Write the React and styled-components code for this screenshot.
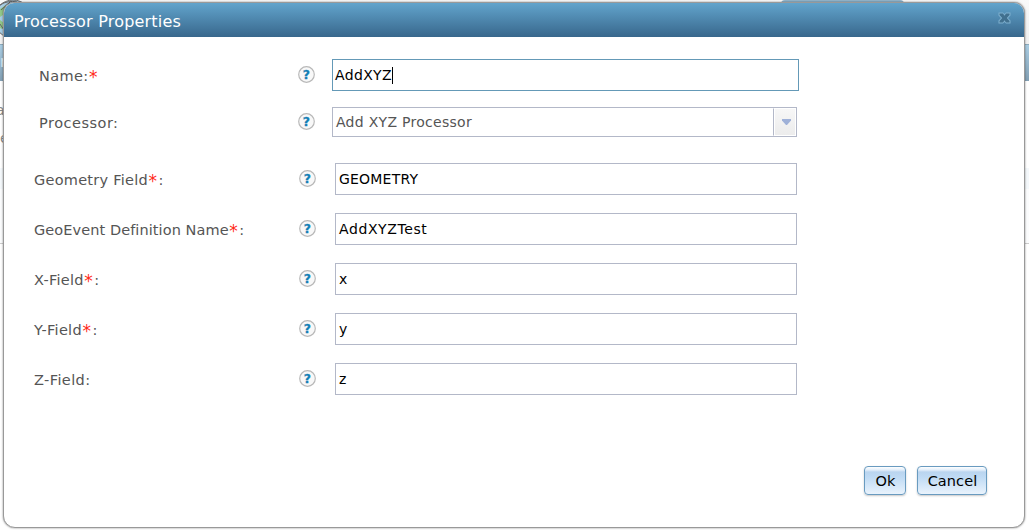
import React from 'react';
import styled, { createGlobalStyle } from 'styled-components';

const GlobalStyle = createGlobalStyle`
  * { box-sizing: border-box; }
  body { margin: 0; overflow: hidden; background: #fff; font-family: "DejaVu Sans", Verdana, sans-serif; }
`;

const Screen = styled.div`
  position: relative;
  width: 1029px;
  height: 532px;
  padding: 2px 4px 4px 3px;
  overflow: hidden;
`;

const Backdrop = styled.div`
  position: absolute;
  inset: 0;
  display: flex;
  flex-direction: column;
`;

const PageTop = styled.div`
  height: 44px;
  background: linear-gradient(#f9f9f9, #f0f0f0);
`;

const PageTab = styled.div`
  width: 123px;
  height: 20px;
  margin-left: 781px;
  border-radius: 4px 4px 0 0;
  background: #91b5cc;
`;

const PageNav = styled.div`
  height: 37px;
  border-top: 1px solid #8ba9bb;
  background: linear-gradient(#a9cce2, #829fb3);
  color: #e8f0f5;
  font-size: 15px;
  line-height: 34px;
`;

const PageBody = styled.div`
  height: 163px;
  padding-top: 15px;
  border-bottom: 1px solid #ccc;
  background: linear-gradient(#fff 0 87px, #f4f8fb 87px 108px, #fbfcfd 108px);
  color: #8a8a8a;
  font-size: 14px;
  line-height: 28px;
`;

const PageLine = styled.div`
  margin-left: ${(p) => p.$shift}px;
`;

const Globe = styled.svg`
  position: absolute;
  top: 0;
  left: 0;
`;

const Dialog = styled.div`
  position: relative;
  display: flex;
  flex-direction: column;
  height: 526px;
  border: 1px solid #999;
  border-radius: 11px 11px 12px 12px;
  background: #fff;
  box-shadow: 0 0 2px rgba(0, 0, 0, 0.5);
  overflow: hidden;
`;

const Header = styled.div`
  display: flex;
  justify-content: space-between;
  height: 34px;
  padding: 0 13px 0 10px;
  background: linear-gradient(#62a4cc, #38678c);
  color: #fff;
`;

const Title = styled.div`
  font-size: 16px;
  line-height: 37px;
  letter-spacing: 0.2px;
`;

const CloseIcon = styled.svg`
  margin-top: 8px;
`;

const Form = styled.div`
  display: flex;
  flex-direction: column;
  padding: 22px 0 0 30px;
`;

const MainFields = styled.div`
  display: flex;
  flex-direction: column;
  gap: 16px;
  padding-left: 5px;
`;

const PropertyFields = styled.div`
  display: flex;
  flex-direction: column;
  gap: 18px;
  margin-top: 26px;
`;

const Row = styled.div`
  display: flex;
  align-items: center;
`;

const Label = styled.div`
  width: ${(p) => p.$width}px;
  padding-top: 1px;
  color: #555;
  font-size: 14.5px;
  line-height: 20px;
  white-space: nowrap;
`;

const LabelText = styled.span`
  letter-spacing: ${(p) => p.$track ?? 0.2}px;
`;

const Required = styled.span`
  margin: 0 1.5px 0 ${(p) => p.$before ?? 0.5}px;
  color: #ff2a1a;
  font-size: 17px;
  line-height: 1px;
  vertical-align: -2px;
`;

const HelpIcon = styled.svg`
  flex: none;
  margin: 0 ${(p) => p.$gap}px 0 0;
`;

const Field = styled.div`
  display: flex;
  align-items: center;
  width: ${(p) => (p.$focused ? 467 : 462)}px;
  height: 32px;
  padding-left: ${(p) => (p.$focused ? 2 : 3)}px;
  border: 1px solid ${(p) => (p.$focused ? '#6499b7' : '#b3b8c8')};
  color: #000;
  font-size: 14px;
  letter-spacing: ${(p) => p.$track || 0}px;
`;

const Caret = styled.span`
  width: 1px;
  height: 17px;
  background: #000;
`;

const Select = styled.div`
  display: flex;
  justify-content: space-between;
  width: 465px;
  height: 30px;
  padding-left: 3px;
  border: 1px solid #b3b8c8;
  color: #555;
  font-size: 14px;
  line-height: 29px;
  letter-spacing: 0.28px;
`;

const SelectArrow = styled.div`
  display: flex;
  align-items: center;
  justify-content: center;
  width: 23px;
  padding: 0 0 0 3px;
  border: 1px solid #fff;
  border-left-color: #b3b8c8;
  box-shadow: inset 1px 0 #fff;
  background: linear-gradient(#f7f7f7, #ececec);
`;

const Actions = styled.div`
  display: flex;
  gap: 11px;
  margin: auto 37px 32px auto;
`;

const Button = styled.button`
  width: ${(p) => p.$width}px;
  height: 29px;
  padding: 1px 0 0 1px;
  border: 1px solid #699bc0;
  border-radius: 4px;
  background: linear-gradient(#fff 0, #e2eefa 3px, #bad5ef 5px, #bfdaf4 10px, #e9f3fc 100%);
  box-shadow: 0 1px 2px rgba(0, 0, 0, 0.22);
  color: #000;
  font: 14.5px "DejaVu Sans", Verdana, sans-serif;
  letter-spacing: 0.1px;
`;

function Help({ gap }) {
  return (
    <HelpIcon $gap={gap} width="18" height="18" viewBox="0 0 18 18">
      <circle cx="9.5" cy="8.5" r="7.8" fill="#f8f8f8" stroke="#b9b9b9" strokeWidth="1.2" />
      <text x="9.5" y="13" textAnchor="middle" fill="#147fb5" stroke="#147fb5" strokeWidth="0.3" fontSize="12.5" fontWeight="bold" fontFamily="DejaVu Sans">?</text>
    </HelpIcon>
  );
}

const properties = [
  { label: 'Geometry Field', required: true, value: 'GEOMETRY', track: 0.2 },
  { label: 'GeoEvent Definition Name', required: true, value: 'AddXYZTest', track: 0.6, labelTrack: 0.08 },
  { label: 'X-Field', required: true, value: 'x' },
  { label: 'Y-Field', required: true, value: 'y', labelTrack: 0.3 },
  { label: 'Z-Field', required: false, value: 'z', labelTrack: 0.4 },
];

export default function App() {
  return (
    <Screen>
      <GlobalStyle />
      <Backdrop>
        <PageTop><PageTab /></PageTop>
        <PageNav>r</PageNav>
        <PageBody>
          <PageLine $shift={-4}>a</PageLine>
          <PageLine $shift={0}>e</PageLine>
        </PageBody>
      </Backdrop>
      <Globe width="28" height="40" viewBox="0 0 28 40">
        <circle cx="13" cy="19" r="19" fill="#a7cde4" stroke="#666" strokeWidth="1" />
        <path d="M0 9L6 5L9 7L3 15L0 17ZM0 20L4 23L2 29L0 28Z" fill="#91c788" />
        <path d="M0 5Q8 0 17 2M1 10L10 2M0 24L8 36" fill="none" stroke="#666" />
      </Globe>
      <Dialog>
        <Header>
          <Title>Processor Properties</Title>
          <CloseIcon width="13" height="13" viewBox="0 0 13 13">
            <path d="M0.5 1.5H5L6.5 3L8 1.5H12.5V4.5L10 7L12.5 9.5V12.5H8L6.5 11L5 12.5H0.5V9.5L3 7L0.5 4.5Z" fill="#7fb0cf" />
            <path d="M1.5 2.5H5L6.5 4.8L8 2.5H11.5V4L8.8 7L11.5 10V11.5H8L6.5 9.2L5 11.5H1.5V10L4.2 7L1.5 4Z" fill="#41708f" />
          </CloseIcon>
        </Header>
        <Form>
          <MainFields>
            <Row>
              <Label $width={258}><LabelText $track={0.35}>Name:</LabelText><Required $before={0.5}>*</Required></Label>
              <Help gap={17} />
              <Field $focused $track={0.35}>AddXYZ<Caret /></Field>
            </Row>
            <Row>
              <Label $width={258}><LabelText $track={0.5}>Processor:</LabelText></Label>
              <Help gap={17} />
              <Select>
                Add XYZ Processor
                <SelectArrow>
                  <svg width="9" height="6" viewBox="0 0 9 6">
                    <path d="M0 0H9V1.5L5 6H4L0 1.5Z" fill="#9fb1d8" />
                  </svg>
                </SelectArrow>
              </Select>
            </Row>
          </MainFields>
          <PropertyFields>
            {properties.map((p) => (
              <Row key={p.label}>
                <Label $width={264}>
                  <LabelText $track={p.labelTrack ?? 0.25}>{p.label}</LabelText>
                  {p.required && <Required>*</Required>}
                  <LabelText>:</LabelText>
                </Label>
                <Help gap={19} />
                <Field $track={p.track}>{p.value}</Field>
              </Row>
            ))}
          </PropertyFields>
        </Form>
        <Actions>
          <Button $width={42}>Ok</Button>
          <Button $width={70}>Cancel</Button>
        </Actions>
      </Dialog>
    </Screen>
  );
}
